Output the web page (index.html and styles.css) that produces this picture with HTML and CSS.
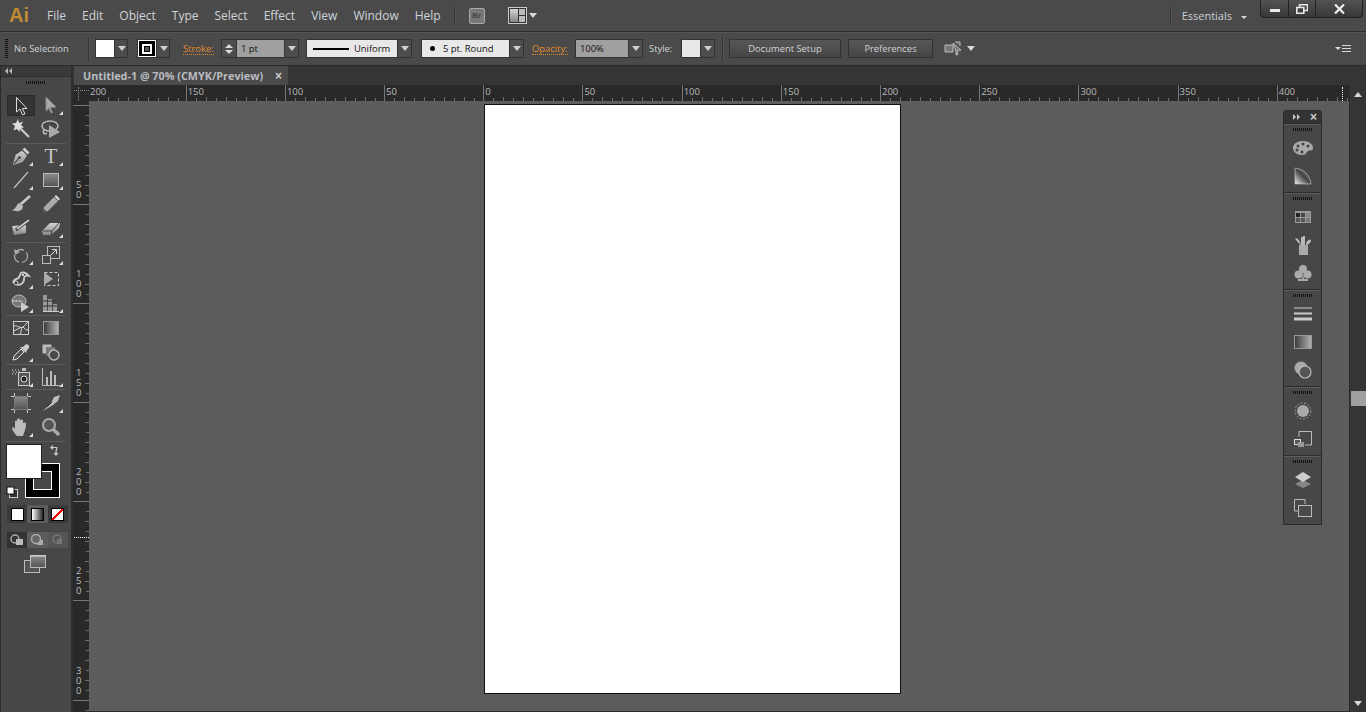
FILE: index.html
```html
<!DOCTYPE html>
<html lang="en">
<head>
  <meta charset="UTF-8">
  <meta name="viewport" content="width=device-width, initial-scale=1.0">
  <title>Adobe Illustrator</title>
  <link rel="stylesheet" href="styles.css">
</head>
<body>
  <!-- shared gradients for the icons -->
  <svg class="defs" aria-hidden="true">
    <defs>
      <linearGradient id="gv" x1="0" y1="0" x2="0" y2="1"><stop offset="0" stop-color="#8a8a8a"/><stop offset="1" stop-color="#555"/></linearGradient>
      <linearGradient id="gh" x1="0" y1="0" x2="1" y2="0"><stop offset="0" stop-color="#3a3a3a"/><stop offset="1" stop-color="#b5b5b5"/></linearGradient>
      <linearGradient id="gm" x1="0" y1="0" x2="0" y2="1"><stop offset="0" stop-color="#d5d5d5"/><stop offset="1" stop-color="#858585"/></linearGradient>
      <linearGradient id="gw" x1="0" y1="1" x2="1" y2="0"><stop offset="0" stop-color="#eee"/><stop offset=".5" stop-color="#444"/><stop offset="1" stop-color="#999"/></linearGradient>
    </defs>
  </svg>

  <div class="app">
    <header class="app-bar">
      <span class="logo">Ai</span>
      <nav class="menu">
        <span>File</span><span>Edit</span><span>Object</span><span>Type</span><span>Select</span><span>Effect</span><span>View</span><span>Window</span><span>Help</span>
      </nav>
      <i class="sep sep-tall bar-sep"></i>
      <span class="bridge">Br</span>
      <svg class="layout-ico" width="19" height="17" viewBox="0 0 19 17"><rect x=".5" y=".5" width="18" height="16" fill="#333" stroke="#ccc"/><rect x="2" y="2" width="8" height="13" fill="url(#gm)"/><rect x="11" y="2" width="6" height="6" fill="#bbb"/><rect x="11" y="9" width="6" height="6" fill="#bbb"/></svg>
      <i class="tri layout-tri"></i>
      <i class="sep sep-tall right-sep"></i>
      <span class="workspace-name">Essentials</span>
      <i class="tri tri-small"></i>
      <div class="win-btns">
        <span class="win-btn win-min"><i></i></span>
        <span class="win-btn win-max">
          <svg width="12" height="10" viewBox="0 0 12 10"><path d="M3.500 3V.8h8v5.700H8.500M.8 3.500h7v5.700h-7z" fill="none" stroke="#e8e8e8" stroke-width="1.600"/></svg>
        </span>
        <span class="win-btn win-close">
          <svg width="11" height="10" viewBox="0 0 11 10"><path d="M1 .5l9 9M10 .5l-9 9" stroke="#eee" stroke-width="2.200"/></svg>
        </span>
      </div>
    </header>

    <div class="control-bar">
      <i class="grip-v"></i>
      <span class="no-sel">No Selection</span>
      <i class="sep"></i>
      <div class="combo fill-combo"><span class="swatch white"></span><span class="drop"></span></div>
      <div class="combo stroke-combo"><span class="swatch stroke-swatch"><i></i></span><span class="drop"></span></div>
      <span class="label link stroke-label">Stroke:</span>
      <div class="combo weight-combo">
        <span class="spin"><i class="tri tri-up"></i><i class="tri"></i></span>
        <span class="field">1 pt</span><span class="drop"></span>
      </div>
      <div class="combo uniform-combo">
        <span class="field light"><i class="stroke-line"></i>Uniform</span><span class="drop"></span>
      </div>
      <div class="combo round-combo">
        <span class="field light"><i class="dot"></i>5 pt. Round</span><span class="drop"></span>
      </div>
      <span class="label link opacity-label">Opacity:</span>
      <div class="combo opacity-combo"><span class="field">100%</span><span class="drop"></span></div>
      <span class="label style-label">Style:</span>
      <div class="combo style-combo"><span class="swatch pale"></span><span class="drop"></span></div>
      <i class="sep sep-right"></i>
      <span class="btn btn-setup">Document Setup</span>
      <span class="btn btn-prefs">Preferences</span>
      <svg class="align-ico" width="17" height="16" viewBox="0 0 17 16"><path d="M1 4h8v7H1zM11 1h5v4M12 10l-3-8 8 7-4 .5 1 4-2 .5z" fill="#777" stroke="#bbb"/></svg>
      <i class="tri align-tri"></i>
      <span class="panel-menu"><i class="tri tri-small"></i><span class="menu-lines"></span></span>
    </div>

    <div class="workspace">
      <aside class="toolbox">
        <div class="toolbox-head"><span class="collapse-l"></span></div>
        <i class="grip-h"></i>

        <div class="tool-group g1">
          <span class="tool active"><svg viewBox="0 0 20 20"><path d="M5.500 1.500V16l3.500-3 2.500 6 2.500-1-2.500-5.500h4.500z" fill="#333" stroke="#ddd"/></svg></span>
          <span class="tool more"><svg viewBox="0 0 20 20"><path d="M5 2v14l4-3.500 6-.5z" fill="#aaa" stroke="#888"/><path d="M8 12l3 6" stroke="#999" stroke-width="2"/></svg></span>
          <span class="tool"><svg viewBox="0 0 20 20"><path d="M8 8l10 10" stroke="#ccc" stroke-width="2.200"/><path d="M7 0l1 4 4-1.500-2 3.500 3 2.500-4 .5-.5 4-2.500-3-3.500 1.500L4 7 1 4.500l4-.5z" fill="#ddd"/></svg></span>
          <span class="tool"><svg viewBox="0 0 20 20"><ellipse cx="9" cy="7" rx="8" ry="5" fill="none" stroke="#bbb" stroke-width="1.500"/><path d="M8 6v13l11-6z" fill="#aaa"/><path d="M3 11c-2 3 1 5 3 3" fill="none" stroke="#bbb" stroke-width="1.500"/></svg></span>
        </div>

        <div class="tool-group g2">
          <span class="tool more"><svg viewBox="0 0 20 20"><path d="M2.500 18.500L5 9l6-4 4.500 4.500-4 6z" fill="url(#gm)" stroke="#ddd" stroke-width=".6"/><path d="M11.500 3.500l2-2 5 5-2 2z" fill="#ccc"/><path d="M3 18l5-6" stroke="#333"/><circle cx="8.500" cy="11.500" r="1.200" fill="#333"/></svg></span>
          <span class="tool more type-tool">T</span>
          <span class="tool more"><svg viewBox="0 0 20 20"><path d="M3 18L17 2" stroke="#bbb" stroke-width="1.400"/></svg></span>
          <span class="tool more"><svg viewBox="0 0 20 20"><rect x="2.500" y="3.500" width="15" height="13" fill="url(#gv)" stroke="#bbb"/></svg></span>
          <span class="tool"><svg viewBox="0 0 20 20"><path d="M19 2l-9 8" stroke="#ccc" stroke-width="2.400"/><path d="M9 9c-4 0-3 6-8 7 4 2 11 2 11-4z" fill="#bbb"/></svg></span>
          <span class="tool"><svg viewBox="0 0 20 20"><path d="M2 18l1-5L13 3l4 4L7 17z" fill="#aaa"/><path d="M13.500 2.500l1.500-1.500 4 4-1.500 1.500z" fill="#ddd"/><path d="M2 18l1-3 2 2z" fill="#333"/></svg></span>
          <span class="tool"><svg viewBox="0 0 20 20"><path d="M1 8l14-1v8L3 17z" fill="url(#gm)"/><path d="M5 12L18 2" stroke="#333" stroke-width="3"/><path d="M6 11L18 2" stroke="#ccc" stroke-width="1.800"/></svg></span>
          <span class="tool more"><svg viewBox="0 0 20 20"><path d="M1 13L9 5h10l-1 5-8 7H2z" fill="url(#gm)"/><path d="M2 13h9l7-8M11 13l-1 4" fill="none" stroke="#444"/></svg></span>
        </div>

        <div class="tool-group g3">
          <span class="tool more"><svg viewBox="0 0 20 20"><circle cx="10" cy="11" r="6.500" fill="none" stroke="#aaa" stroke-width="1.300" stroke-dasharray="9 3"/><path d="M3 4l1 6 5-3z" fill="#aaa"/></svg></span>
          <span class="tool more"><svg viewBox="0 0 20 20"><rect x="6.500" y="1.500" width="12" height="12" fill="none" stroke="#bbb"/><rect x="1.500" y="10.500" width="8" height="8" fill="#474747" stroke="#bbb"/><path d="M10 10l5-5M11 4.500h4.500V9" fill="none" stroke="#ddd"/></svg></span>
          <span class="tool more"><svg viewBox="0 0 20 20"><path d="M2 14C4 7 7 13 9 6c1-4 6-3 9 1-3-1-5 0-5 3 0 5-5 7-8 5" fill="none" stroke="#ccc" stroke-width="1.800"/><circle cx="5" cy="14" r="2" fill="#333" stroke="#ddd"/><circle cx="12" cy="6" r="1" fill="#fff"/></svg></span>
          <span class="tool"><svg viewBox="0 0 20 20"><rect x="3.500" y="3.500" width="14" height="13" fill="none" stroke="#ccc" stroke-dasharray="3 2"/><path d="M3 3l9 7-9 6z" fill="#aaa"/></svg></span>
          <span class="tool more"><svg viewBox="0 0 20 20"><ellipse cx="8" cy="8" rx="7" ry="6" fill="#777" stroke="#bbb"/><path d="M1.500 8h10" stroke="#eee" stroke-dasharray="2 1"/><path d="M10 9v10l8-5z" fill="#ccc"/></svg></span>
          <span class="tool more"><svg viewBox="0 0 20 20"><path d="M2 2h4v16H2zM7 6h4v12H7zM12 11h4v7h-4z" fill="#999"/><path d="M2 8h14M2 13h14" stroke="#333"/><path d="M2 18.500h16" stroke="#ccc"/></svg></span>
        </div>

        <div class="tool-group g4">
          <span class="tool"><svg viewBox="0 0 20 20"><rect x="2.500" y="3.500" width="15" height="13" fill="#4a4a4a" stroke="#ccc"/><path d="M3 8c4-1 6 3 9 1s3-4 5-5M3 13c3-2 5-2 7-4M10 9c1 3 0 5-1 7M12 9c2 2 3 3 5 3" fill="none" stroke="#ddd"/></svg></span>
          <span class="tool"><svg viewBox="0 0 20 20"><rect x="2.500" y="3.500" width="15" height="13" fill="url(#gh)" stroke="#999"/></svg></span>
          <span class="tool more"><svg viewBox="0 0 20 20"><path d="M2 18l1-4 7-7 3 3-7 7z" fill="#555" stroke="#ddd"/><path d="M9 5l6 6 1-3 2-2c1-3-2-5-4-3l-2 2z" fill="#ccc"/></svg></span>
          <span class="tool"><svg viewBox="0 0 20 20"><rect x="1.500" y="2.500" width="9" height="9" fill="#bbb"/><rect x="5" y="5" width="9" height="9" fill="#777"/><circle cx="13" cy="13" r="5" fill="#4a4a4a" stroke="#bbb" stroke-width="1.400"/></svg></span>
        </div>

        <div class="tool-group g5">
          <span class="tool more"><svg viewBox="0 0 20 20"><path d="M1 3h1M4 3h1M7 3h1M2 5h1M5 5h1M8 5h1M1 7h1M4 7h1M7 7h1" stroke="#ddd"/><rect x="11" y="1" width="4" height="3" fill="#bbb"/><rect x="7.500" y="5.500" width="11" height="13" fill="#555" stroke="#ccc"/><circle cx="13" cy="12" r="3" fill="#222" stroke="#ddd"/></svg></span>
          <span class="tool more"><svg viewBox="0 0 20 20"><path d="M1.500 1v17.500H19" fill="none" stroke="#bbb"/><path d="M5 10h2v8H5zM9 4h2v14H9zM13 8h2v10h-2z" fill="#bbb"/></svg></span>
        </div>

        <div class="tool-group g6">
          <span class="tool"><svg viewBox="0 0 20 20"><rect x="3.500" y="3.500" width="13" height="13" fill="url(#gv)" stroke="#777"/><path d="M3.500 0v3M16.500 0v3M3.500 17v3M16.500 17v3M0 3.500h3M0 16.500h3M17 3.500h3M17 16.500h3" stroke="#ccc"/></svg></span>
          <span class="tool more"><svg viewBox="0 0 20 20"><path d="M2 18L10 10l3-6 6-2-2 6-5 4z" fill="#bbb"/><path d="M6 14l5-5" stroke="#333"/></svg></span>
          <span class="tool more"><svg viewBox="0 0 20 20"><path d="M6 19c-2-2-5-6-5-8 0-1 2-1 3 1V5c0-2 2-2 2 0V3c0-2 3-2 3 0v1c0-2 3-2 3 0v3c0-2 3-2 3 0 0 5-2 8-3 12z" fill="#bbb"/></svg></span>
          <span class="tool"><svg viewBox="0 0 20 20"><path d="M12 12l6 6" stroke="#aaa" stroke-width="3.500"/><circle cx="8" cy="8" r="6" fill="#555" stroke="#aaa" stroke-width="2"/></svg></span>
        </div>

        <div class="color-box">
          <span class="big-stroke"><i></i></span>
          <span class="big-fill"></span>
          <svg class="swap-ico" width="11" height="11" viewBox="0 0 11 11"><path d="M0 2.500L3 0v5zM6 11L3.500 8h5z" fill="#ccc"/><path d="M3 2.500h3C8 2.500 6 3 6 8" fill="none" stroke="#ccc" stroke-width="1.200"/></svg>
          <svg class="default-ico" width="12" height="12" viewBox="0 0 12 12"><rect x="3.500" y="3.500" width="8" height="8" fill="#333" stroke="#ccc"/><rect x="1" y="1" width="7" height="7" fill="#fff" stroke="#111"/></svg>
        </div>

        <div class="mode-row color-modes">
          <span class="mode"><i class="m-white"></i></span>
          <span class="mode on"><i class="m-grad"></i></span>
          <span class="mode"><i class="m-none"></i></span>
        </div>

        <div class="mode-row draw-modes">
          <span class="mode dark-mode"><svg width="14" height="12" viewBox="0 0 14 12"><circle cx="5" cy="5" r="4" fill="none" stroke="#aaa" stroke-width="1.500"/><rect x="6" y="5" width="7" height="6" fill="#bbb"/></svg></span>
          <span class="mode on"><svg width="14" height="12" viewBox="0 0 14 12"><rect x="7" y="6" width="6" height="5" fill="#aaa"/><circle cx="6" cy="5" r="4.500" fill="#666" stroke="#aaa" stroke-width="1.500"/></svg></span>
          <span class="mode off"><svg width="14" height="12" viewBox="0 0 14 12"><circle cx="6" cy="5" r="4" fill="none" stroke="#777" stroke-width="1.500"/><rect x="6" y="5" width="5" height="5" fill="#777"/></svg></span>
        </div>

        <svg class="screen-ico" width="22" height="18" viewBox="0 0 22 18"><rect x=".5" y="5.500" width="15" height="12" fill="#555" stroke="#bbb"/><rect x="6.500" y=".5" width="15" height="12" fill="url(#gv)" stroke="#bbb"/><path d="M6 1h16" stroke="#ddd"/></svg>
      </aside>

      <div class="document">
        <div class="tab-strip">
          <div class="tab"><span class="tab-title">Untitled-1 @ 70% (CMYK/Preview)</span><span class="tab-close">×</span></div>
        </div>
        <div class="doc-body">
          <div class="doc-view">
            <div class="ruler-top">
              <div class="ruler-corner"><i class="dot-v"></i><i class="dot-h"></i></div>
              <div class="h-ruler">
                <span>200</span><span>150</span><span>100</span><span>50</span><span>0</span><span>50</span><span>100</span><span>150</span><span>200</span><span>250</span><span>300</span><span>350</span><span>400</span>
              </div>
              <i class="cursor-x"></i>
            </div>
            <div class="view-row">
              <div class="v-ruler">
                <span class="first"></span><span>50</span><span>100</span><span>150</span><span>200</span><span>250</span><span>300</span><span></span>
                <i class="cursor-y"></i>
              </div>
              <main class="canvas"><div class="artboard"></div></main>
            </div>
          </div>
          <div class="scrollbar">
            <i class="tri tri-up sb-tri"></i>
            <span class="thumb"></span>
            <i class="tri sb-tri"></i>
          </div>
        </div>
      </div>
    </div>

    <!-- floating panel dock -->
    <aside class="dock">
      <div class="dock-head"><span class="expand-r"></span><span class="dock-x">×</span></div>
      <section class="dock-sec">
        <i class="grip-h"></i>
        <span class="dock-ico"><svg viewBox="0 0 22 18" width="22" height="18"><path d="M11 2c6 0 10 3 10 7 0 3-3 2-5 3-2 1-1 4-6 4C5 16 1 13 1 9s4-7 10-7z" fill="#aaa"/><circle cx="6" cy="7" r="1.500" fill="#444"/><circle cx="11" cy="5" r="1.500" fill="#444"/><circle cx="16" cy="7" r="1.500" fill="#444"/><circle cx="5" cy="11" r="1.500" fill="#444"/><circle cx="10" cy="13" r="1.500" fill="#444"/></svg></span>
        <span class="dock-ico"><svg viewBox="0 0 20 18" width="20" height="18"><path d="M2 1c9 1 15 7 16 16H2z" fill="url(#gw)" stroke="#ccc" stroke-width=".6"/></svg></span>
      </section>
      <section class="dock-sec">
        <i class="grip-h"></i>
        <span class="dock-ico"><svg viewBox="0 0 16 12" width="16" height="12"><rect width="16" height="12" fill="#999"/><path d="M1 2h4v4H1z" fill="#222"/><path d="M6 2h4v4H6z" fill="#444"/><path d="M11 2h4v4h-4z" fill="#888"/><path d="M1 7h4v4H1zM6 7h4v4H6z" fill="#555"/><path d="M11 7h4v4h-4z" fill="#777"/></svg></span>
        <span class="dock-ico"><svg viewBox="0 0 18 20" width="18" height="20"><path d="M5 10h9v10H5z" fill="#aaa"/><path d="M8 10V2M10 10V1" stroke="#bbb" stroke-width="2"/><path d="M7 10C5 8 2 6 1 3c3 0 5 3 6 7zM12 10c0-3 2-6 5-5 0 2-2 5-5 5z" fill="#bbb"/></svg></span>
        <span class="dock-ico"><svg viewBox="0 0 18 18" width="18" height="18"><circle cx="9" cy="5" r="4" fill="#aaa"/><circle cx="4.500" cy="10.500" r="4" fill="#aaa"/><circle cx="13.500" cy="10.500" r="4" fill="#aaa"/><path d="M9 8l-1 7H4v2h10v-2h-4z" fill="#aaa"/></svg></span>
      </section>
      <section class="dock-sec">
        <i class="grip-h"></i>
        <span class="dock-ico"><svg viewBox="0 0 18 14" width="18" height="14"><path d="M0 1h18" stroke="#ccc"/><path d="M0 6.500h18" stroke="#ccc" stroke-width="2"/><path d="M0 12h18" stroke="#ccc" stroke-width="3"/></svg></span>
        <span class="dock-ico"><svg viewBox="0 0 18 14" width="18" height="14"><rect x=".5" y=".5" width="17" height="13" fill="url(#gh)" stroke="#999"/></svg></span>
        <span class="dock-ico"><svg viewBox="0 0 18 18" width="18" height="18"><circle cx="7" cy="7" r="6.500" fill="#aaa"/><circle cx="11" cy="11" r="6" fill="#555" stroke="#bbb" stroke-width="1.200"/></svg></span>
      </section>
      <section class="dock-sec">
        <i class="grip-h"></i>
        <span class="dock-ico"><svg viewBox="0 0 18 18" width="18" height="18"><circle cx="9" cy="9" r="8" fill="none" stroke="#999" stroke-dasharray="2 1.500"/><circle cx="9" cy="9" r="6" fill="#aaa"/></svg></span>
        <span class="dock-ico"><svg viewBox="0 0 18 16" width="18" height="16"><path d="M5 6V.5h12.500V14H11" fill="none" stroke="#bbb"/><rect x=".5" y="8.500" width="6" height="5" fill="#555" stroke="#ddd"/><rect x="4" y="11" width="6" height="5" fill="#999"/></svg></span>
      </section>
      <section class="dock-sec">
        <i class="grip-h"></i>
        <span class="dock-ico"><svg viewBox="0 0 18 18" width="18" height="18"><path d="M9 9l8 4-8 4-8-4z" fill="#888"/><path d="M9 1l8 5-8 5-8-5z" fill="#ccc"/></svg></span>
        <span class="dock-ico"><svg viewBox="0 0 18 18" width="18" height="18"><path d="M5 12H.5V.5H11V5" fill="none" stroke="#bbb"/><rect x="4.500" y="6.500" width="13" height="11" fill="#4a4a4a" stroke="#bbb"/></svg></span>
      </section>
    </aside>
  </div>
</body>
</html>
```

FILE: styles.css
```css
* {
  box-sizing: border-box;
  margin: 0;
  padding: 0;
}

body {
  background: #5c5c5c;
  font-family: "Open Sans", "Noto Sans", sans-serif;
  overflow: hidden;
}

i {
  display: block;
}

.defs {
  position: absolute;
  width: 0;
  height: 0;
}

.app {
  position: relative;
  display: flex;
  flex-direction: column;
  width: 1366px;
  height: 712px;
  overflow: hidden;
}

/* small arrows */
.tri {
  width: 0;
  height: 0;
  border-left: 4px solid transparent;
  border-right: 4px solid transparent;
  border-top: 5px solid #d8d8d8;
}

.tri-up {
  border-top: 0;
  border-bottom: 5px solid #d8d8d8;
}

.tri-small {
  border-left-width: 3px;
  border-right-width: 3px;
  border-top-width: 3px;
}

.sep {
  flex: none;
  width: 1px;
  height: 24px;
  background: #333;
  box-shadow: 1px 0 0 #555;
}

.sep-tall {
  height: 20px;
}

/* top application bar */
.app-bar {
  display: flex;
  align-items: center;
  flex: 0 0 32px;
  padding-left: 9px;
  background: #4a4a4a;
  border-bottom: 1px solid #2b2b2b;
}

.logo {
  width: 38px;
  font: bold 20px "Liberation Sans", sans-serif;
  color: #c08a30;
}

.menu {
  display: flex;
  gap: 16px;
  font-size: 12px;
  color: #d0d4d8;
}

.bar-sep {
  margin-left: 13px;
}

.bridge {
  width: 16px;
  height: 16px;
  margin-left: 14px;
  background: #777;
  border: 1px solid #aaa;
  border-radius: 2px;
  font: bold 8px/14px "Liberation Sans", sans-serif;
  color: #444;
  text-align: center;
}

.layout-ico {
  margin-left: 23px;
}

.layout-tri {
  margin-left: 2px;
}

.right-sep {
  margin-left: auto;
}

.workspace-name {
  margin-left: 11px;
  font-size: 11px;
  color: #c8d0d8;
}

.tri-small {
  margin-left: 9px;
  margin-top: 3px;
}

.win-btns {
  display: flex;
  align-self: flex-start;
  height: 18px;
  margin: 0 3px 0 13px;
  background: linear-gradient(#525252, #383838);
  border: 1px solid #222;
  border-top: 0;
  border-radius: 0 0 4px 4px;
}

.win-btn {
  display: flex;
  align-items: center;
  justify-content: center;
  height: 100%;
  border-left: 1px solid #222;
}

.win-min {
  width: 27px;
  border-left: 0;
}

.win-min i {
  width: 10px;
  height: 3px;
  margin-top: 3px;
  background: #e8e8e8;
}

.win-max {
  width: 27px;
}

.win-close {
  width: 47px;
}

/* control bar */
.control-bar {
  display: flex;
  align-items: center;
  flex: 0 0 34px;
  padding: 0 0 1px 5px;
  background: #4a4a4a;
  border-top: 1px solid #555;
  border-bottom: 1px solid #2b2b2b;
  font-size: 9.400px;
  color: #d0d4d8;
}

.grip-v {
  width: 3px;
  height: 19px;
  background: repeating-linear-gradient(#111 0 1px, transparent 1px 2px);
}

.no-sel {
  width: 74px;
  margin-left: 6px;
}

.combo {
  display: flex;
  flex: none;
  height: 19px;
  background: #4d4d4d;
  border: 1px solid #333;
}

.swatch {
  flex: none;
  width: 18px;
  height: 100%;
}

.white {
  background: #fff;
}

.pale {
  background: #e8e8e8;
}

.stroke-swatch {
  display: flex;
  align-items: center;
  justify-content: center;
  background: #000;
  border: 1px solid #fff;
}

.stroke-swatch i {
  width: 10px;
  height: 10px;
  background: #555;
  border: 2px solid #fff;
  box-shadow: inset 0 0 0 1px #000;
}

.drop {
  display: flex;
  flex: none;
  align-items: center;
  justify-content: center;
  width: 14px;
  border-left: 1px solid #333;
  margin-left: auto;
}

.drop::before {
  content: "";
  border-left: 4px solid transparent;
  border-right: 4px solid transparent;
  border-top: 5px solid #d0d0d0;
}

.fill-combo {
  width: 33px;
  margin-left: 6px;
}

.stroke-combo {
  width: 33px;
  margin-left: 9px;
}

.label {
  flex: none;
}

.link {
  color: #e08a2c;
  border-bottom: 1px dotted #e08a2c;
  line-height: 11px;
  margin-top: 1px;
}

.stroke-label {
  width: 31px;
  margin-left: 13px;
}

.weight-combo {
  width: 78px;
  margin-left: 7px;
}

.spin {
  display: flex;
  flex: none;
  flex-direction: column;
  align-items: center;
  justify-content: center;
  gap: 2px;
  width: 15px;
  border-right: 1px solid #333;
}

.spin .tri {
  border-left-width: 4px;
  border-right-width: 4px;
  border-top-width: 4px;
}

.spin .tri-up {
  border-bottom-width: 4px;
  border-top-width: 0;
}

.field {
  display: flex;
  flex: 1;
  align-items: center;
  padding-left: 4px;
  background: #a0a0a0;
  color: #111;
}

.field.light {
  background: #e8e8e8;
}

.uniform-combo {
  width: 106px;
  margin-left: 7px;
}

.stroke-line {
  width: 36px;
  height: 2px;
  margin: 0 5px 0 2px;
  background: #000;
}

.round-combo {
  width: 103px;
  margin-left: 9px;
}

.dot {
  width: 5px;
  height: 5px;
  margin: 0 8px 0 4px;
  background: #000;
  border-radius: 50%;
}

.opacity-label {
  width: 36px;
  margin-left: 8px;
}

.opacity-combo {
  width: 68px;
  margin-left: 7px;
}

.style-label {
  width: 24px;
  margin-left: 6px;
}

.style-combo {
  width: 34px;
  margin-left: 8px;
}

.sep-right {
  margin-left: 7px;
}

.btn {
  display: flex;
  flex: none;
  align-items: center;
  justify-content: center;
  height: 19px;
  background: linear-gradient(#575757, #454545);
  border: 1px solid #333;
}

.btn-setup {
  width: 112px;
  margin-left: 6px;
}

.btn-prefs {
  width: 85px;
  margin-left: 7px;
}

.align-ico {
  margin-left: 11px;
}

.align-tri {
  margin-left: 6px;
}

.panel-menu {
  display: flex;
  align-items: center;
  margin-left: auto;
  margin-right: 15px;
}

.panel-menu .tri-small {
  margin: 0 1px 0 0;
}

.menu-lines {
  width: 9px;
  height: 7px;
  background: repeating-linear-gradient(#d8d8d8 0 1px, transparent 1px 3px);
}

/* workspace */
.workspace {
  display: flex;
  flex: 1;
  min-height: 0;
}

.toolbox {
  display: flex;
  flex: 0 0 73px;
  flex-direction: column;
  background: #474747;
  border-left: 1px solid #2b2b2b;
  border-right: 2px solid #2e2e2e;
}

.toolbox-head {
  display: flex;
  align-items: center;
  height: 11px;
  padding-left: 4px;
  background: #3a3a3a;
  border-bottom: 1px solid #2b2b2b;
}

.collapse-l {
  position: relative;
  width: 0;
  height: 0;
  border: 3px solid transparent;
  border-left: 0;
  border-right: 3px solid #bbb;
}

.collapse-l::after {
  content: "";
  position: absolute;
  top: -3px;
  left: 4px;
  border: 3px solid transparent;
  border-left: 0;
  border-right: 3px solid #bbb;
}

.grip-h {
  width: 20px;
  height: 3px;
  margin: 4px auto 0;
  background: repeating-linear-gradient(90deg, #111 0 1px, transparent 1px 2px);
}

.tool-group {
  display: grid;
  grid-template-columns: 30px 30px;
  grid-auto-rows: 24px;
  margin: 0 5px;
  border-bottom: 1px solid #5c5c5c;
}

.g1 {
  margin-top: 9px;
  padding-bottom: 2px;
}

.g2 {
  padding-bottom: 2px;
}

.g6 {
  padding-top: 1px;
  padding-bottom: 2px;
}

.tool {
  position: relative;
  display: flex;
  align-items: center;
  justify-content: center;
}

.tool svg {
  width: 20px;
  height: 20px;
}

.tool.active {
  width: 28px;
  height: 21px;
  margin: 2px 0 0 1px;
  background: #333;
  border: 1px solid #2a2a2a;
}

.tool.more::after {
  content: "";
  position: absolute;
  right: 3px;
  bottom: 2px;
  border-left: 4px solid transparent;
  border-bottom: 4px solid #ddd;
}

.type-tool {
  font: 21px/24px "Liberation Serif", serif;
  color: #c4c4c4;
}

/* fill and stroke */
.color-box {
  position: relative;
  height: 54px;
  margin: 2px 0 0;
}

.big-fill {
  position: absolute;
  top: 0;
  left: 5px;
  width: 36px;
  height: 35px;
  background: #fff;
  border: 1px solid #222;
}

.big-stroke {
  position: absolute;
  top: 19px;
  left: 24px;
  width: 35px;
  height: 35px;
  padding: 7px;
  background: #000;
  border: 1px solid #fff;
}

.big-stroke i {
  width: 19px;
  height: 19px;
  background: #474747;
  border: 1px solid #fff;
}

.swap-ico {
  position: absolute;
  top: 1px;
  left: 49px;
}

.default-ico {
  position: absolute;
  top: 42px;
  left: 5px;
}

.mode-row {
  display: flex;
  width: 61px;
  margin-left: 6px;
  background: #3a3a3a;
}

.mode {
  display: flex;
  align-items: center;
  justify-content: center;
  flex: 1;
  height: 100%;
}

.mode.on {
  background: #5c5c5c;
}

.dark-mode {
  background: #333;
}

.mode.off {
  background: #555;
}

.color-modes {
  height: 18px;
  margin-top: 7px;
}

.color-modes i {
  width: 13px;
  height: 13px;
  border: 1px solid #000;
}

.m-white {
  background: #fff;
}

.m-grad {
  background: linear-gradient(90deg, #fff, #222);
}

.m-none {
  background: linear-gradient(to top left, #fff 42%, #f00 42% 58%, #fff 58%);
}

.draw-modes {
  height: 16px;
  margin-top: 9px;
}

.screen-ico {
  flex: none;
  margin: 7px 0 0 23px;
}

/* document area */
.document {
  display: flex;
  flex: 1;
  flex-direction: column;
  min-width: 0;
}

.tab-strip {
  flex: 0 0 19px;
  padding-left: 1px;
  background: #353535;
}

.tab {
  display: flex;
  align-items: center;
  justify-content: space-between;
  width: 214px;
  height: 19px;
  padding: 0 6px 0 9px;
  background: #4a4a4a;
  color: #b9bcc0;
}

.tab-title {
  font-size: 10.800px;
  font-weight: 700;
  white-space: nowrap;
}

.tab-close {
  font: bold 12px/12px "Liberation Sans", sans-serif;
  color: #ccc;
}

.doc-body {
  display: flex;
  flex: 1;
  min-height: 0;
}

.doc-view {
  display: flex;
  flex: 1;
  flex-direction: column;
  min-width: 0;
}

/* rulers */
.ruler-top {
  position: relative;
  display: flex;
  flex: 0 0 16px;
  background: #292929;
}

.ruler-corner {
  position: relative;
  flex: 0 0 16px;
}

.dot-v {
  position: absolute;
  top: 2px;
  left: 5px;
  height: 14px;
  border-left: 1px dotted #888;
}

.dot-h {
  position: absolute;
  top: 5px;
  left: 1px;
  width: 15px;
  border-top: 1px dotted #888;
}

.h-ruler {
  display: flex;
  flex: 1;
  overflow: hidden;
}

.h-ruler span {
  flex: 0 0 99.200px;
  height: 16px;
  padding: 0 0 0 1px;
  border-left: 1px solid #777;
  font-size: 9.500px;
  line-height: 14px;
  color: #bbb;
  background-image:
    linear-gradient(90deg, transparent 9px, #6e6e6e 9px 10px, transparent 10px),
    linear-gradient(90deg, transparent 19px, #6e6e6e 19px 20px, transparent 20px);
  background-repeat: repeat-x;
  background-size: 20px 3px, 20px 4px;
  background-position: bottom left, bottom left;
}

.h-ruler span:first-child {
  flex-basis: 96.700px;
  border-left: 0;
}

.cursor-x {
  position: absolute;
  top: 2px;
  right: 6px;
  height: 14px;
  border-left: 1px dotted #fff;
}

.view-row {
  display: flex;
  flex: 1;
  min-height: 0;
}

.v-ruler {
  position: relative;
  flex: 0 0 16px;
  padding-top: 2.500px;
  overflow: hidden;
  background: #292929;
}

.v-ruler span {
  display: flex;
  align-items: flex-end;
  height: 99.200px;
  padding: 0 7px 4px 3px;
  border-bottom: 1px solid #777;
  font-size: 9.500px;
  line-height: 10px;
  color: #bbb;
  word-break: break-all;
  background-image:
    linear-gradient(transparent 9px, #6e6e6e 9px 10px, transparent 10px),
    linear-gradient(transparent 19px, #6e6e6e 19px 20px, transparent 20px);
  background-repeat: repeat-y;
  background-size: 3px 20px, 4px 20px;
  background-position: top right, top right;
}

.v-ruler .first {
  height: 2px;
  background: none;
  padding: 0;
}

.cursor-y {
  position: absolute;
  top: 436px;
  left: 1px;
  width: 15px;
  border-top: 1px dotted #fff;
}

.canvas {
  flex: 1;
  padding: 3px 0 0 395px;
  background: #5c5c5c;
  border-bottom: 1px solid #2b2b2b;
}

.artboard {
  width: 417px;
  height: 590px;
  background: #fff;
  border: 1px solid #111;
}

.scrollbar {
  position: relative;
  display: flex;
  flex: 0 0 17px;
  flex-direction: column;
  align-items: center;
  justify-content: space-between;
  padding: 7px 0 6px;
  background: #353535;
  border-left: 1px solid #2b2b2b;
}

.thumb {
  position: absolute;
  top: 306px;
  left: 1px;
  width: 15px;
  height: 15px;
  background: #a0a0a0;
}

/* floating dock */
.dock {
  position: absolute;
  top: 110px;
  left: 1283px;
  width: 39px;
  background: #474747;
  border: 1px solid #2b2b2b;
  border-radius: 3px 3px 0 0;
}

.dock-head {
  display: flex;
  align-items: center;
  justify-content: space-between;
  height: 12px;
  padding: 0 4px 0 9px;
  background: #333;
}

.expand-r {
  position: relative;
  width: 0;
  height: 0;
  border: 3px solid transparent;
  border-right: 0;
  border-left: 3px solid #ccc;
}

.expand-r::after {
  content: "";
  position: absolute;
  top: -3px;
  left: 1px;
  border: 3px solid transparent;
  border-right: 0;
  border-left: 3px solid #ccc;
}

.dock-x {
  font: bold 12px/12px "Liberation Sans", sans-serif;
  color: #ccc;
}

.dock-sec {
  padding: 1px 0 2px;
  border-top: 1px solid #2b2b2b;
  box-shadow: inset 0 1px 0 #5c5c5c;
}

.dock-sec .grip-h {
  margin: 3px auto 3px;
}

.dock-ico {
  display: flex;
  align-items: center;
  justify-content: center;
  height: 28px;
}
```
